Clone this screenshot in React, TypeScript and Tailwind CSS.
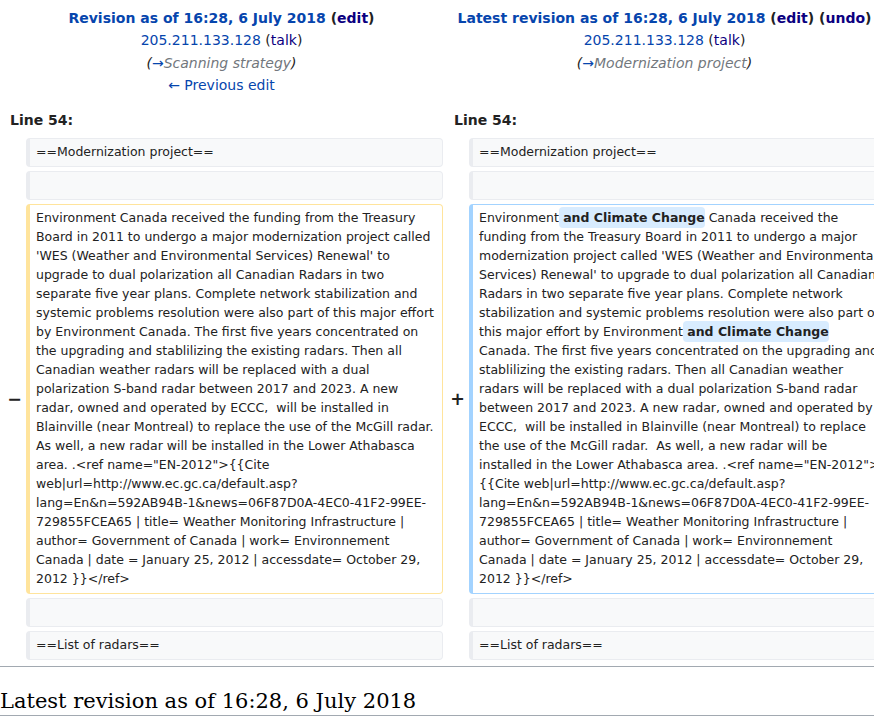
export default function App() {
  const oldText =
    "Environment Canada received the funding from the Treasury Board in 2011 to undergo a major modernization project called 'WES (Weather and Environmental Services) Renewal' to upgrade to dual polarization all Canadian Radars in two separate five year plans. Complete network stabilization and systemic problems resolution were also part of this major effort by Environment Canada. The first five years concentrated on the upgrading and stablilizing the existing radars. Then all Canadian weather radars will be replaced with a dual polarization S-band radar between 2017 and 2023. A new radar, owned and operated by ECCC,  will be installed in Blainville (near Montreal) to replace the use of the McGill radar.  As well, a new radar will be installed in the Lower Athabasca area. .<ref name=\"EN-2012\">{{Cite web|url=http://www.ec.gc.ca/default.asp?lang=En&n=592AB94B-1&news=06F87D0A-4EC0-41F2-99EE-729855FCEA65 | title= Weather Monitoring Infrastructure | author= Government of Canada | work= Environnement Canada | date = January 25, 2012 | accessdate= October 29, 2012 }}</ref>"

  const newMiddle =
    " Canada received the funding from the Treasury Board in 2011 to undergo a major modernization project called 'WES (Weather and Environmental Services) Renewal' to upgrade to dual polarization all Canadian Radars in two separate five year plans. Complete network stabilization and systemic problems resolution were also part of this major effort by Environment"
  const newEnd =
    " Canada. The first five years concentrated on the upgrading and stablilizing the existing radars. Then all Canadian weather radars will be replaced with a dual polarization S-band radar between 2017 and 2023. A new radar, owned and operated by ECCC,  will be installed in Blainville (near Montreal) to replace the use of the McGill radar.  As well, a new radar will be installed in the Lower Athabasca area. .<ref name=\"EN-2012\">{{Cite web|url=http://www.ec.gc.ca/default.asp?lang=En&n=592AB94B-1&news=06F87D0A-4EC0-41F2-99EE-729855FCEA65 | title= Weather Monitoring Infrastructure | author= Government of Canada | work= Environnement Canada | date = January 25, 2012 | accessdate= October 29, 2012 }}</ref>"

  return (
    <div className="w-[874px] h-[724px] overflow-hidden bg-white">
      <div className="w-[890px] font-['DejaVu_Sans',sans-serif] text-[14px] leading-[22.4px] text-[#222]">
        {/* revision headers */}
        <div className="grid grid-cols-[443px_443px] pt-[7px]">
          <div className="text-center">
            <div className="font-bold">
              <span className="text-[#0645ad]">Revision as of 16:28, 6 July 2018</span>{' '}
              (<span className="text-[#0b0080]">edit</span>)
            </div>
            <div>
              <span className="text-[#0645ad]">205.211.133.128</span> (<span className="text-[#0b0080]">talk</span>)
            </div>
            <div className="italic">
              (<span className="text-[#0645ad]">→</span>
              <span className="text-[#72777d]">Scanning strategy</span>)
            </div>
            <div className="text-[#0645ad]">← Previous edit</div>
          </div>
          <div className="text-center">
            <div className="font-bold">
              <span className="text-[#0645ad]">Latest revision as of 16:28, 6 July 2018</span>{' '}
              (<span className="text-[#0b0080]">edit</span>) (<span className="text-[#0b0080]">undo</span>)
            </div>
            <div>
              <span className="text-[#0645ad]">205.211.133.128</span> (<span className="text-[#0b0080]">talk</span>)
            </div>
            <div className="italic">
              (<span className="text-[#0645ad]">→</span>
              <span className="text-[#72777d]">Modernization project</span>)
            </div>
          </div>
        </div>

        <div className="grid grid-cols-[443px_443px] mt-[12px] font-bold">
          <div className="pl-[10px]">Line 54:</div>
          <div className="pl-[11px]">Line 54:</div>
        </div>

        {/* diff rows */}
        <div className="grid grid-cols-[26px_417px_26px_417px] gap-y-[4px] mt-[7px] text-[12.5px] leading-[19px]">
          <div />
          <div className="rounded-[4px] border border-l-4 border-[#eaecf0] bg-[#f8f9fa] px-[6px] pt-[3px] pb-[5px] whitespace-pre-wrap">==Modernization project==</div>
          <div />
          <div className="rounded-[4px] border border-l-4 border-[#eaecf0] bg-[#f8f9fa] px-[6px] pt-[3px] pb-[5px] whitespace-pre-wrap">==Modernization project==</div>

          <div />
          <div className="h-[29px] rounded-[4px] border border-l-4 border-[#eaecf0] bg-[#f8f9fa]" />
          <div />
          <div className="h-[29px] rounded-[4px] border border-l-4 border-[#eaecf0] bg-[#f8f9fa]" />

          <div className="flex items-center justify-end pr-[4px] text-[17.5px] font-bold">−</div>
          <div className="rounded-[4px] border border-l-4 border-[#ffe49c] bg-white px-[6px] pt-[3px] pb-[5px] whitespace-pre-wrap break-words">
            {oldText}
          </div>
          <div className="flex items-center justify-end pr-[4px] text-[17.5px] font-bold">+</div>
          <div className="rounded-[4px] border border-l-4 border-[#a3d3ff] bg-white pl-[6px] pr-[5px] pt-[3px] pb-[5px] whitespace-pre-wrap break-words">
            Environment<span className="font-bold bg-[#d8ecff] rounded-[4px] py-[3px]"> and Climate Change</span>
            {newMiddle}
            <span className="font-bold bg-[#d8ecff] rounded-[4px] py-[3px]"> and Climate Change</span>
            {newEnd}
          </div>

          <div />
          <div className="h-[29px] rounded-[4px] border border-l-4 border-[#eaecf0] bg-[#f8f9fa]" />
          <div />
          <div className="h-[29px] rounded-[4px] border border-l-4 border-[#eaecf0] bg-[#f8f9fa]" />

          <div />
          <div className="rounded-[4px] border border-l-4 border-[#eaecf0] bg-[#f8f9fa] px-[6px] pt-[3px] pb-[5px] whitespace-pre-wrap">==List of radars==</div>
          <div />
          <div className="rounded-[4px] border border-l-4 border-[#eaecf0] bg-[#f8f9fa] px-[6px] pt-[3px] pb-[5px] whitespace-pre-wrap">==List of radars==</div>
        </div>

        <div className="h-px bg-[#a2a9b1] mt-[6px]" />
        <h2 className="mt-[21px] border-b border-[#a2a9b1] font-['DejaVu_Serif',serif] text-[21px] leading-[27.3px] font-normal text-black">
          Latest revision as of 16:28, 6 July 2018
        </h2>
      </div>
    </div>
  )
}
